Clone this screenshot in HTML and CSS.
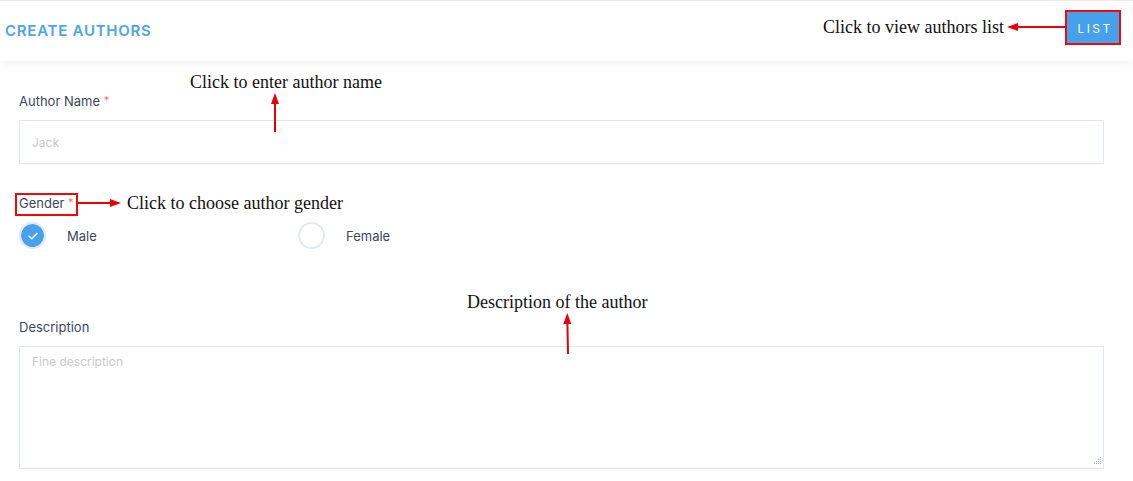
FILE: index.html
```html
<!DOCTYPE html>
<html>
<head>
<meta charset="utf-8">
<link rel="stylesheet" href="styles.css">
</head>
<body>
<div class="page">
  <header class="topbar">
    <h1 class="title">CREATE AUTHORS</h1>
    <button class="list-btn">LIST</button>
  </header>
  <form class="form">
    <div class="field">
      <label class="label">Author Name <span class="req">*</span></label>
      <input class="input" type="text" placeholder="Jack">
    </div>
    <div class="field field-gender">
      <label class="label">Gender <span class="req">*</span></label>
      <div class="radios">
        <div class="radio-opt">
          <span class="radio checked">
            <svg width="12" height="10" viewBox="0 0 12 10"><path d="M2 5.2 L4.8 7.8 L10 2.4" fill="none" stroke="#fff" stroke-width="1.4" stroke-linecap="round" stroke-linejoin="round"/></svg>
          </span>
          <span class="radio-text">Male</span>
        </div>
        <div class="radio-opt">
          <span class="radio"></span>
          <span class="radio-text">Female</span>
        </div>
      </div>
    </div>
    <div class="field field-desc">
      <label class="label">Description</label>
      <div class="textarea-wrap">
        <textarea class="textarea" placeholder="Fine description"></textarea>
        <svg class="grip" width="10" height="10" viewBox="0 0 10 10">
          <g fill="#b5b5b5">
            <rect x="8" y="0" width="1" height="1"/>
            <rect x="6" y="2" width="1" height="1"/><rect x="8" y="2" width="1" height="1"/>
            <rect x="4" y="4" width="1" height="1"/><rect x="6" y="4" width="1" height="1"/><rect x="8" y="4" width="1" height="1"/>
            <rect x="2" y="6" width="1" height="1"/><rect x="4" y="6" width="1" height="1"/><rect x="6" y="6" width="1" height="1"/><rect x="8" y="6" width="1" height="1"/>
          </g>
        </svg>
      </div>
    </div>
  </form>

  <div class="note note-list">Click to view authors list</div>
  <div class="note note-name">Click to enter author name</div>
  <div class="note note-gender">Click to choose author gender</div>
  <div class="note note-desc">Description of the author</div>
  <div class="hl hl-list"></div>
  <div class="hl hl-gender"></div>
  <svg class="arrows" width="1133" height="481" viewBox="0 0 1133 481">
    <g stroke="#e8000b" stroke-width="2" fill="#e8000b">
      <line x1="1065" y1="27" x2="1016" y2="27"/>
      <polygon points="1007,27 1018,23 1018,31" stroke="none"/>
      <line x1="275" y1="132" x2="275" y2="102"/>
      <polygon points="275,93 271,104 279,104" stroke="none"/>
      <line x1="78" y1="203" x2="112" y2="203"/>
      <polygon points="121,203 110,199 110,207" stroke="none"/>
      <line x1="568" y1="354" x2="567.4" y2="322"/>
      <polygon points="567.3,313 563.3,324 571.3,324" stroke="none"/>
    </g>
  </svg>
</div>
</body>
</html>
```

FILE: styles.css
```css
html, body {
  margin: 0;
  padding: 0;
  background: #fff;
}

.page {
  position: relative;
  width: 1133px;
  height: 481px;
  overflow: hidden;
  font-family: "Inter", "Open Sans", sans-serif;
}

.topbar {
  display: flex;
  align-items: flex-start;
  justify-content: space-between;
  height: 60px;
  border-top: 1px solid #ececec;
  background: #fff;
  box-shadow: 0 3px 10px rgba(0, 0, 0, 0.06);
  padding: 0 12px 0 5px;
  position: relative;
  z-index: 1;
}

.title {
  margin: 21px 0 0;
  font-size: 15px;
  font-weight: 600;
  line-height: 18px;
  color: #4da3ec;
  letter-spacing: 0.75px;
}

.list-btn {
  margin-top: 11px;
  width: 54px;
  height: 33px;
  border: none;
  background: #45a1ec;
  color: #fff;
  font-family: "Inter", "Open Sans", sans-serif;
  font-size: 12px;
  letter-spacing: 2.4px;
  padding: 0 0 0 2px;
  cursor: pointer;
}

.form {
  padding: 30px 29px 0 19px;
}

.field {
  display: flex;
  flex-direction: column;
}

.label {
  display: block;
  height: 20px;
  font-size: 13px;
  line-height: 20px;
  color: #3d4757;
  margin-bottom: 9px;
}

.req {
  color: #f07a6a;
  font-size: 11px;
  line-height: 0;
  vertical-align: 2px;
}

.input {
  box-sizing: border-box;
  height: 44px;
  border: 1px solid #dee7f4;
  padding: 0 12px;
  font-family: "Inter", "Open Sans", sans-serif;
  font-size: 12px;
  color: #333;
  outline: none;
}

.input::placeholder,
.textarea::placeholder {
  color: #c9c9c9;
}

.field-gender {
  margin-top: 29px;
}

.radios {
  display: flex;
}

.radio-opt {
  display: flex;
  align-items: center;
  width: 279px;
  height: 27px;
}

.radio {
  box-sizing: border-box;
  width: 27px;
  height: 27px;
  border-radius: 50%;
  border: 2px solid #e1e9f7;
  display: flex;
  align-items: center;
  justify-content: center;
  margin-right: 21px;
  flex-shrink: 0;
}

.radio.checked {
  background: #47a1ec;
  background-clip: padding-box;
  border-color: #dfe9f9;
}

.radio-text {
  font-size: 13px;
  color: #3d4757;
}

.field-desc {
  margin-top: 68px;
}

.textarea-wrap {
  position: relative;
  display: flex;
}

.textarea {
  box-sizing: border-box;
  width: 100%;
  height: 123px;
  border: 1px solid #dee7f4;
  padding: 7px 12px;
  font-family: "Inter", "Open Sans", sans-serif;
  font-size: 12px;
  resize: none;
  outline: none;
}

.grip {
  position: absolute;
  right: 2px;
  bottom: 2px;
}

.note {
  position: absolute;
  font-family: "Liberation Serif", "Times New Roman", serif;
  font-size: 18px;
  line-height: 20px;
  color: #111;
  white-space: nowrap;
  z-index: 2;
}

.note-list { left: 823px; top: 17px; }
.note-name { left: 190px; top: 72px; }
.note-gender { left: 127px; top: 193px; }
.note-desc { left: 467px; top: 292px; }

.hl {
  position: absolute;
  box-sizing: border-box;
  border: 2px solid #ee0a0a;
  z-index: 3;
}

.hl-list { left: 1065px; top: 10px; width: 56px; height: 35px; }
.hl-gender { left: 15px; top: 193px; width: 63px; height: 23px; }

.arrows {
  position: absolute;
  left: 0;
  top: 0;
  z-index: 4;
  pointer-events: none;
}
```
